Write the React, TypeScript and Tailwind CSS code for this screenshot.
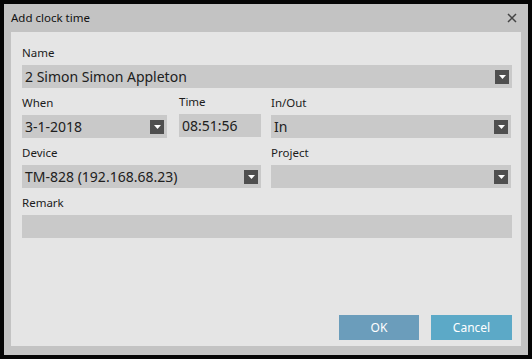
import React from 'react'

function Caret() {
  return (
    <span className="flex h-[14px] w-[14px] items-center justify-center bg-[#4f4f4f]">
      <svg width="7" height="4" viewBox="0 0 7 4">
        <path d="M0 0h7L3.5 4z" fill="#ffffff" />
      </svg>
    </span>
  )
}

function Label({ children }: { children: React.ReactNode }) {
  return <div className="mb-[4px] h-[16px] text-[11.5px] leading-[16px] text-[#1b1b1b]">{children}</div>
}

function Select({ value }: { value?: string }) {
  return (
    <div className="flex h-[23px] items-center justify-between bg-[#c9c9c9] pl-[3px] pr-[3px]">
      <span className="text-[14px] leading-none text-[#202020]">{value}</span>
      <Caret />
    </div>
  )
}

export default function App() {
  return (
    <div
      className="h-[359px] w-[532px] bg-[#050505] p-[4px]"
      style={{ fontFamily: '"Noto Sans", "Open Sans", sans-serif' }}
    >
      <div className="flex h-[351px] w-[524px] flex-col bg-[#c3c3c3] pb-[9px] pl-[7px] pr-[7px]">
        <div className="flex h-[28px] items-center justify-between pr-[4px]">
          <span className="text-[11.5px] text-[#111111]">Add clock time</span>
          <svg width="10" height="10" viewBox="0 0 10 10">
            <path d="M1 1l8 8M9 1l-8 8" stroke="#444444" strokeWidth="1.5" />
          </svg>
        </div>

        <div className="flex flex-1 flex-col bg-[#e5e5e5] pb-[6px] pl-[11px] pr-[9px] pt-[13px]">
          <Label>Name</Label>
          <Select value="2 Simon Simon Appleton" />

          <div className="mt-[7px] grid grid-cols-[239px_240px] gap-x-[10px] gap-y-[7px]">
            <div className="flex gap-[12px]">
              <div className="w-[145px]">
                <Label>When</Label>
                <div className="mt-[1px]">
                  <Select value="3-1-2018" />
                </div>
              </div>
              <div className="w-[82px]">
                <div className="-mt-[1px]">
                  <Label>Time</Label>
                </div>
                <div className="flex h-[23px] items-center bg-[#c9c9c9] pl-[3px] text-[14px] text-[#202020]">
                  08:51:56
                </div>
              </div>
            </div>
            <div>
              <Label>In/Out</Label>
              <Select value="In" />
            </div>
            <div>
              <Label>Device</Label>
              <Select value="TM-828 (192.168.68.23)" />
            </div>
            <div>
              <Label>Project</Label>
              <Select />
            </div>
          </div>

          <div className="mt-[7px]">
            <Label>Remark</Label>
            <div className="h-[23px] bg-[#c9c9c9]" />
          </div>

          <div className="mt-auto flex justify-end gap-[12px]">
            <button className="h-[25px] w-[80px] bg-[#6b9dbb] text-[12px] text-white">OK</button>
            <button className="h-[25px] w-[81px] bg-[#5ca9c7] text-[12px] text-white">Cancel</button>
          </div>
        </div>
      </div>
    </div>
  )
}
